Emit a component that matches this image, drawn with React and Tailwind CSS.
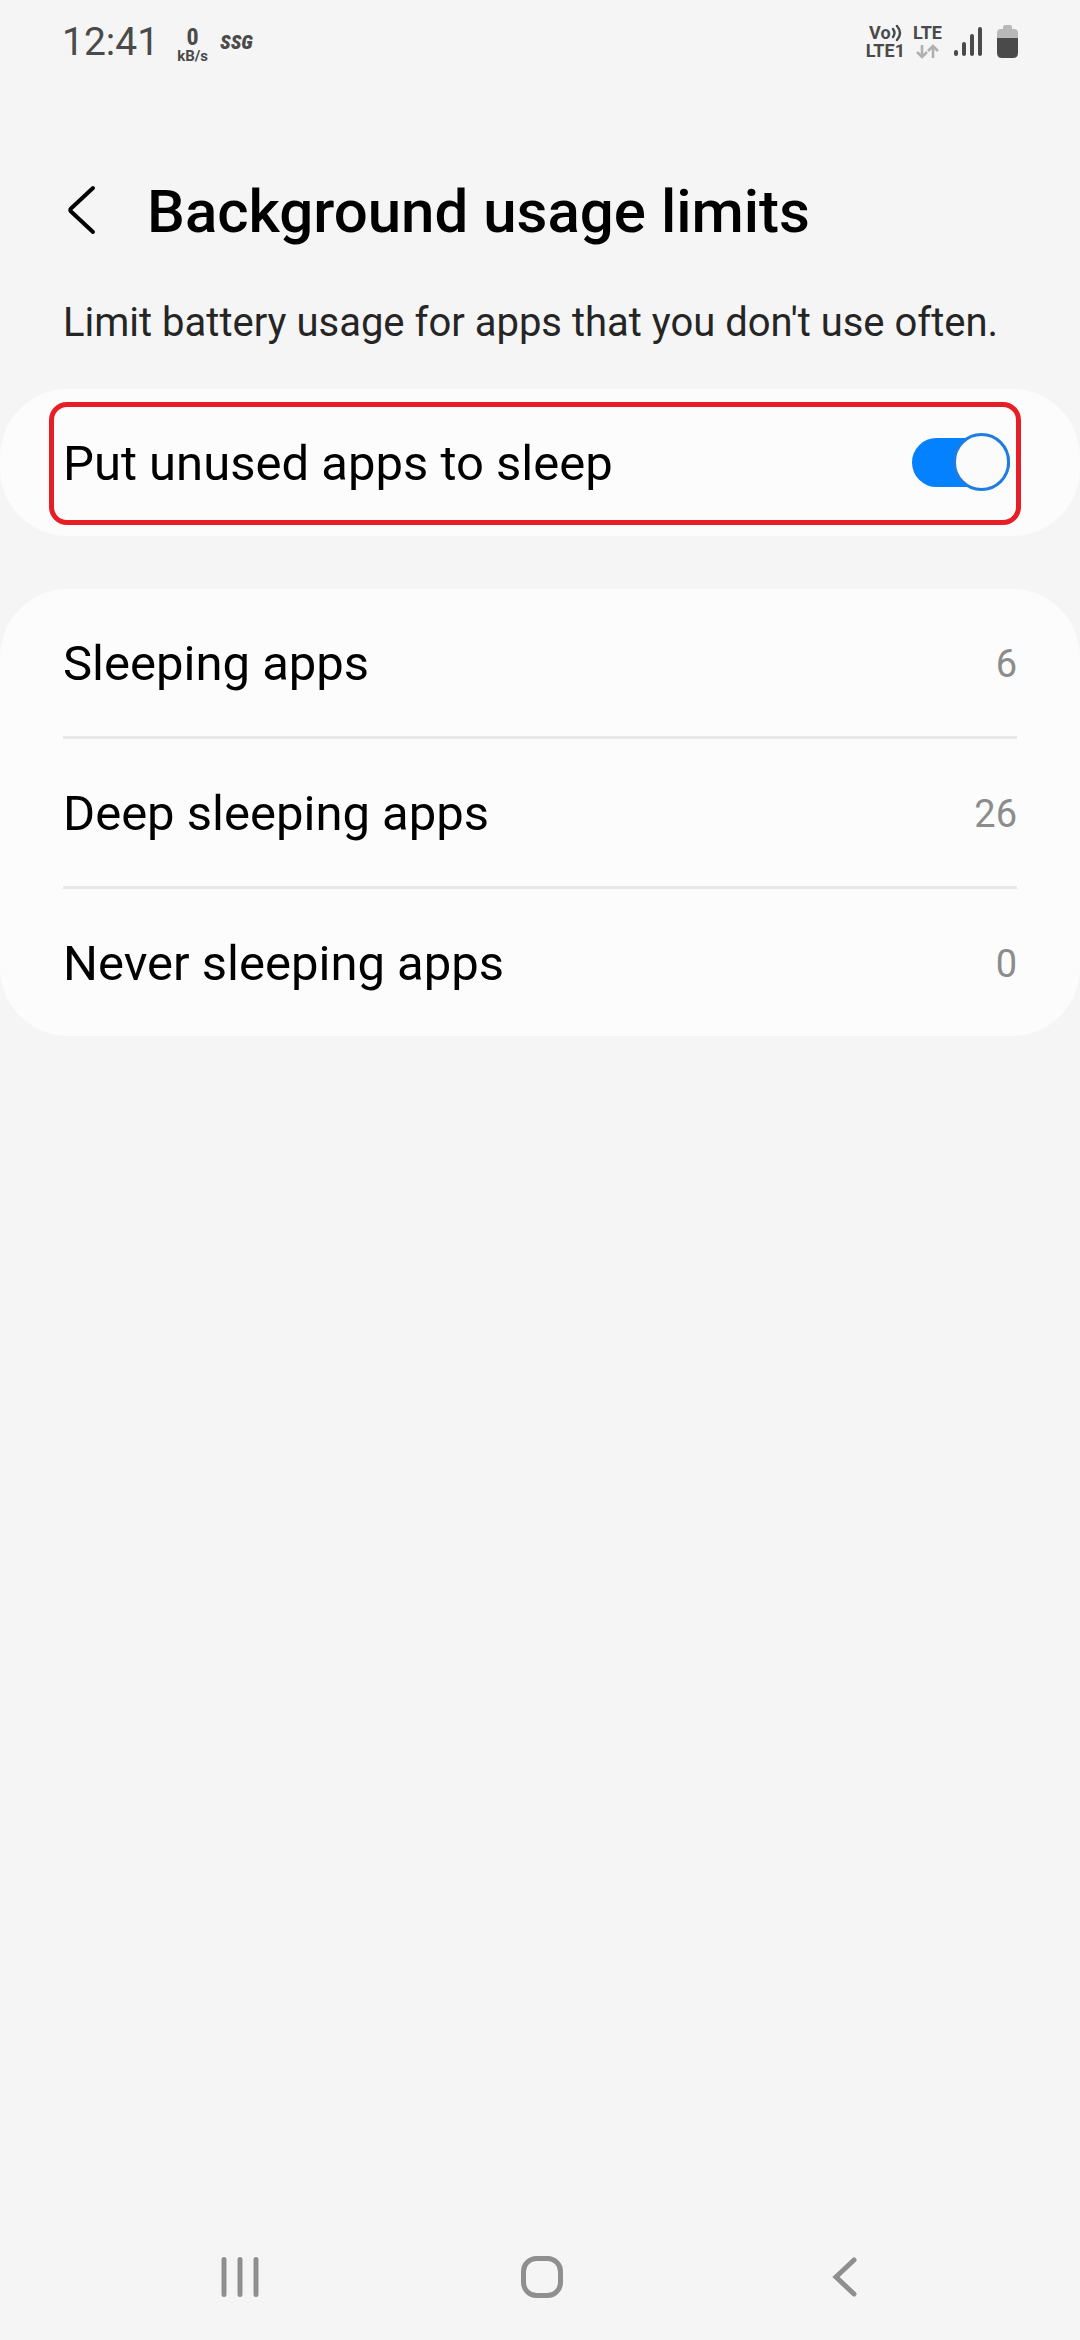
import { useState } from "react";

const APP_LISTS = [
  { label: "Sleeping apps", count: 6 },
  { label: "Deep sleeping apps", count: 26 },
  { label: "Never sleeping apps", count: 0 },
];

function StatusBar() {
  return (
    <div className="flex h-20 items-center justify-between px-[62px] pt-[3px] text-[#4a4a4a]">
      <div className="flex items-center">
        <span className="text-[39px] leading-[46px]">12:41</span>
        <div className="ml-[18px] flex flex-col items-center pt-1 font-bold">
          <span className="font-['Roboto_Condensed',Roboto,sans-serif] text-[24px] leading-6">0</span>
          <span className="text-[15px] leading-[14px]">kB/s</span>
        </div>
        <span className="ml-3 font-['Roboto_Condensed',Roboto,sans-serif] text-[20px] leading-8 font-black italic">
          SSG
        </span>
      </div>
      <div className="flex items-center">
        <div className="flex flex-col items-center text-[18px] leading-[18px] font-bold">
          <span className="flex items-center">
            Vo
            <svg className="h-[18px] w-[11px]" viewBox="0 0 11 18" fill="none" stroke="currentColor" strokeWidth="2.4" strokeLinecap="round">
              <path d="M2 5q3 4 0 8M6 2q6 7 0 14" />
            </svg>
          </span>
          <span>LTE1</span>
        </div>
        <div className="ml-2 flex flex-col items-center text-[18px] leading-[18px] font-bold">
          <span>LTE</span>
          <svg className="h-[18px] w-6" viewBox="0 0 24 18" fill="none" stroke="#b0b0b0" strokeWidth="2.6">
            <path d="M7 3v12M2 10l5 5 5-5M18 16V4M13 9l5-5 5 5" />
          </svg>
        </div>
        <svg className="ml-3 h-[30px] w-7" viewBox="0 0 28 30" fill="none" stroke="currentColor" strokeWidth="4" strokeLinecap="round">
          <path d="M2 25v2M10 17v10M18 9v18M26 2v25" />
        </svg>
        <svg className="ml-[15px] h-[33px] w-[21px]" viewBox="0 0 21 33">
          <path d="M8 0h5q2 0 2 2v2h2q4 0 4 4v5H0V8q0-4 4-4h2V2q0-2 2-2" fill="#b8b8b8" />
          <path d="M0 13h21v15q0 5-5 5H5q-5 0-5-5z" fill="currentColor" />
        </svg>
      </div>
    </div>
  );
}

function Header() {
  return (
    <header className="px-[63px] pt-24">
      <div className="flex items-center">
        <button type="button" aria-label="Back" className="mr-[50px]">
          <svg className="h-[72px] w-[34px]" viewBox="0 0 34 72" fill="none" stroke="black" strokeWidth="4" strokeLinecap="round" strokeLinejoin="round">
            <path d="M30 12L8 32.5q-1.5 1.5 0 3L30 56" />
          </svg>
        </button>
        <h1 className="text-[60px] leading-[72px] font-medium text-black">Background usage limits</h1>
      </div>
      <p className="mt-[51px] text-[40px] leading-[48px] text-[#252525]">
        Limit battery usage for apps that you don't use often.
      </p>
    </header>
  );
}

function SleepToggle() {
  const [enabled, setEnabled] = useState(true);

  return (
    <section className="mt-[42px] rounded-[68px] bg-[#fcfcfc] pt-[13px] pr-[59px] pb-[11px] pl-[49px]">
      <label className="flex h-[123px] cursor-pointer items-center justify-between rounded-[18px] border-5 border-[#e81e26] pr-[6px] pl-[9px]">
        <span className="text-[49px] leading-[58px] text-black">Put unused apps to sleep</span>
        <span className="flex items-center pb-[3px]">
          <input
            type="checkbox"
            role="switch"
            checked={enabled}
            onChange={(e) => setEnabled(e.target.checked)}
            className="peer sr-only"
          />
          <span className="flex h-[49px] w-[98px] items-center justify-start rounded-full bg-[#a0a0a0] peer-checked:justify-end peer-checked:bg-[#0381fe]">
            <span className="h-[58px] w-[57px] shrink-0 rounded-full border-3 border-[#1f7de0] bg-[#fbfbfb]" />
          </span>
        </span>
      </label>
    </section>
  );
}

function AppLists() {
  return (
    <section className="mt-[53px] rounded-[68px] bg-[#fcfcfc] px-[63px]">
      <ul className="divide-y-3 divide-[#e8e8e8]">
        {APP_LISTS.map(({ label, count }) => (
          <li key={label}>
            <button type="button" className="flex h-[147px] w-full items-center justify-between pt-[3px]">
              <span className="text-[49px] leading-[58px] text-black">{label}</span>
              <span className="text-[38px] leading-[46px] text-[#8c8c8c]">{count}</span>
            </button>
          </li>
        ))}
      </ul>
    </section>
  );
}

function NavigationBar() {
  return (
    <nav className="mt-auto flex h-[126px] items-center justify-around pr-[85px] pl-[89px] text-[#8f8f8f]">
      <button type="button" aria-label="Recent apps">
        <svg className="h-11 w-11" viewBox="0 0 44 44" fill="none" stroke="currentColor" strokeWidth="5" strokeLinecap="round">
          <path d="M6 4.5v35M22 4.5v35M38 4.5v35" />
        </svg>
      </button>
      <button type="button" aria-label="Home">
        <svg className="h-11 w-11" viewBox="0 0 44 44" fill="none" stroke="currentColor" strokeWidth="5">
          <rect x="3.5" y="3.5" width="37" height="37" rx="13" />
        </svg>
      </button>
      <button type="button" aria-label="Back">
        <svg className="h-11 w-11" viewBox="0 0 44 44" fill="none" stroke="currentColor" strokeWidth="5" strokeLinecap="round">
          <path d="M32 5L14 22l18 17" />
        </svg>
      </button>
    </nav>
  );
}

function App() {
  return (
    <div className="flex min-h-screen flex-col bg-[#f5f5f5] font-[Roboto,sans-serif]">
      <StatusBar />
      <Header />
      <main>
        <SleepToggle />
        <AppLists />
      </main>
      <NavigationBar />
    </div>
  );
}

export default App;
